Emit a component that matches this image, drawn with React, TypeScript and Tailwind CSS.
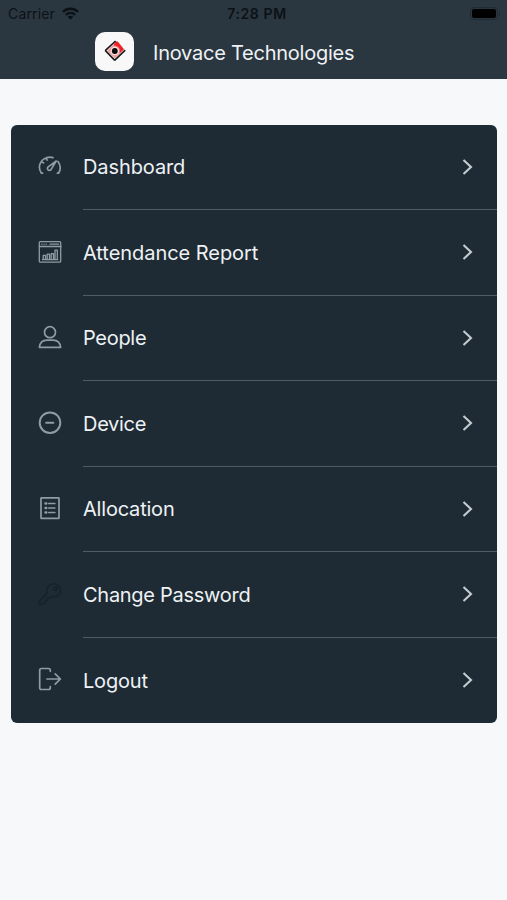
import type { ReactNode } from "react";

function Icon({ children, className = "text-[#909ba3]" }: { children: ReactNode; className?: string }) {
  return (
    <svg
      viewBox="0 0 24 24"
      className={`h-6 w-6 shrink-0 ${className}`}
      fill="none"
      stroke="currentColor"
      strokeWidth="1.7"
      strokeLinecap="round"
      strokeLinejoin="round"
    >
      {children}
    </svg>
  );
}

const items: { label: string; spacing: string; icon: ReactNode }[] = [
  {
    label: "Dashboard",
    spacing: "tracking-[-0.1px]",
    icon: (
      <Icon>
        <path d="M4.6 19.2H3.4A10.6 10.6 0 0 1 1.4 12.5 10.6 10.6 0 0 1 15 3.6M20 7.4a10.8 10.8 0 0 1 .6 11.8h-1.2M4.4 8.2l1.2.7M8.4 4.8l.7 1.3" />
        <path d="M18.2 7 10.2 12.9c-2.3 2 .9 5 2.8 2.7L18.2 7Z" />
      </Icon>
    ),
  },
  {
    label: "Attendance Report",
    spacing: "tracking-[-0.05px]",
    icon: (
      <Icon>
        <g strokeWidth="1.3">
          <rect x="1.3" y="1.7" width="21.4" height="20.5" rx="1" />
          <path d="M1.4 6.5h21.5M3.8 4.2h.2M6 4.2h.2M8.2 4.2h.2M12 4.2h8.5M4.4 19.6h15.4" />
          <path d="M5.2 19.4v-4h2.3v4M9.2 19.4v-5.2h2.3v5.2M13.2 19.4v-5.8h2.3v5.8M17 19.4V10.2h2.3v9.2" />
        </g>
      </Icon>
    ),
  },
  {
    label: "People",
    spacing: "tracking-[-0.3px]",
    icon: (
      <Icon>
        <circle cx="12" cy="7.2" r="5.5" />
        <path d="M1.4 22.3c.5-4.8 3.3-7.2 7.6-7.2h6c4.3 0 7.1 2.4 7.6 7.2H1.4Z" />
      </Icon>
    ),
  },
  {
    label: "Device",
    spacing: "tracking-[-0.3px]",
    icon: (
      <Icon>
        <circle cx="12" cy="11.7" r="10.3" strokeWidth="2" />
        <path d="M8.2 11.7h7.2" strokeWidth="2" />
      </Icon>
    ),
  },
  {
    label: "Allocation",
    spacing: "tracking-[-0.2px]",
    icon: (
      <Icon>
        <rect x="3" y="1.8" width="18" height="20.5" rx=".4" />
        <path d="M10.8 7.5h6M10.8 12h6M10.8 16.5h6" />
        <path d="M7.4 7.5h1M7.4 12h1M7.4 16.5h1" strokeWidth="2.3" />
      </Icon>
    ),
  },
  {
    label: "Change Password",
    spacing: "tracking-[-0.28px]",
    icon: (
      <Icon className="text-[#17232c]">
        <path d="M9.3 11.2C7.2 5.6 11.7 1.4 16.4 2c5 .6 7.7 5.6 5.3 9.5-1.8 3-5.2 3.8-8.2 2.7l-2 2.2H9.2v2.2H7v2.2H5.2L3.6 22.4H1.4v-3.2l7.9-8Z" />
        <circle cx="17.5" cy="6.8" r="1.7" />
      </Icon>
    ),
  },
  {
    label: "Logout",
    spacing: "tracking-[-0.2px]",
    icon: (
      <Icon>
        <path d="M12.3 4.3V3.2c0-1-.6-1.7-1.7-1.7H3.4c-1.1 0-1.7.7-1.7 1.7v17.6c0 1 .6 1.7 1.7 1.7h7.2c1.1 0 1.7-.7 1.7-1.7v-1.1M9 12h13.4M17.2 6.8l5.2 5.2-5.2 5.2" />
      </Icon>
    ),
  },
];

function Logo() {
  return (
    <div className="flex h-[39px] w-[39px] items-center justify-center rounded-[10px] bg-[#f8f8f8]">
      <svg viewBox="0 0 24 24" className="h-6 w-6">
        <path d="M12.2 3.4 20 11.2 12 19.4 4.3 11.7Z" fill="#f29a9a" />
        <path d="M12.4 2.6h2.4l6.2 7.6-4.6 4.4c1.6-4.2-.6-7.6-5.6-8.3Z" fill="#ee2229" />
        <path d="M12.6 2 2.2 11.6M2.2 11.4 11.8 21.4M11.6 21.4 22.2 11.2" stroke="#17191b" strokeWidth="1.6" fill="none" />
        <circle cx="11.8" cy="12" r="4.3" fill="#fff" opacity=".65" />
        <circle cx="11.8" cy="12" r="2.9" fill="#080a0b" />
      </svg>
    </div>
  );
}

export default function App() {
  return (
    <main className="h-[900px] w-[507px] overflow-hidden bg-[#f6f8fa] font-['Inter','Liberation_Sans',sans-serif]">
      <header className="h-[79px] bg-[#2b3740]">
        <div className="grid h-[27px] grid-cols-3 items-center text-[14px] leading-none text-[#0b1117]">
          <div className="flex items-center gap-[7px] pl-[8px]">
            <span className="tracking-[0.15px]">Carrier</span>
            <svg viewBox="0 0 18 13" className="mb-px h-[13px] w-[17px]" fill="none" stroke="currentColor" strokeWidth="2.4">
              <path d="M1 4.7C5.6.4 12.4.4 17 4.7M4 8c2.9-2.7 7.1-2.7 10 0" />
              <path d="m9 13-3-3c1.8-1.5 4.2-1.5 6 0Z" fill="currentColor" stroke="none" />
            </svg>
          </div>
          <span className="pl-[7px] text-center font-semibold tracking-[0.6px]">7:28 PM</span>
          <div className="flex items-center justify-end gap-px pr-[7px]">
            <span className="flex h-[13px] w-[28px] items-center justify-center rounded-[4px] border border-[#1f2a32]">
              <span className="h-[9px] w-[24px] rounded-[2px] bg-black" />
            </span>
            <span className="h-[4px] w-[1px] rounded-r bg-[#1f2a32]" />
          </div>
        </div>
        <div className="flex h-[48px] items-center gap-[19px] pl-[95px]">
          <Logo />
          <h1 className="pt-[3px] text-[20px] leading-6 tracking-[-0.24px] text-[#eef2f5]">Inovace Technologies</h1>
        </div>
      </header>
      <nav className="mr-[10px] ml-[11px] mt-[45.5px] h-[598px] overflow-hidden rounded-[6px] bg-[#1e2b34]">
        {items.map(({ label, spacing, icon }, index) => (
          <a key={label} className="flex h-[85.5px] items-stretch pl-[27px]">
            <span className="flex items-center pb-[2px]">{icon}</span>
            <span
              className={`ml-[21px] flex grow items-center justify-between pr-[24px] ${
                index < items.length - 1 ? "border-b border-[#505c65]" : ""
              }`}
            >
              <span className={`pt-px text-[20px] leading-6 text-[#eef2f5] ${spacing}`}>{label}</span>
              <svg viewBox="0 0 11 18" className="h-[18px] w-[11px]" fill="none" stroke="#c4ccd2" strokeWidth="2.1">
                <path d="m1.5 2 7.5 7-7.5 7" />
              </svg>
            </span>
          </a>
        ))}
      </nav>
    </main>
  );
}
